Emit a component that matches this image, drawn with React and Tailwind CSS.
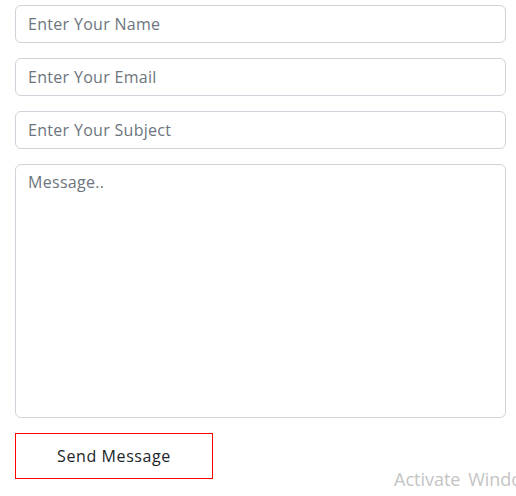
export default function App() {
  const input =
    "h-[38px] w-full rounded-[6px] border border-[#ced4da] bg-white px-3 text-[16px] tracking-[0.3px] text-[#212529] outline-none placeholder:text-[#6c757d]";
  return (
    <div className="relative h-[496px] w-[516px] overflow-hidden bg-white font-['Open_Sans',sans-serif]">
      <form className="flex w-[506px] flex-col gap-[15px] pl-[15px] pt-[5px]">
        <input className={input} placeholder="Enter Your Name" />
        <input className={input} placeholder="Enter Your Email" />
        <input className={input} placeholder="Enter Your Subject" />
        <textarea
          className="h-[254px] w-full resize-none rounded-[6px] border border-[#ced4da] bg-white px-3 py-[5px] text-[16px] tracking-[0.3px] text-[#212529] outline-none placeholder:text-[#6c757d]"
          placeholder="Message.."
        />
        <button
          type="button"
          className="h-[46px] w-[198px] border border-[#ff0000] bg-white text-[16px] tracking-[0.6px] text-[#212529]"
        >
          Send Message
        </button>
      </form>
      <div className="pointer-events-none absolute left-[394px] top-[466px] whitespace-nowrap font-['Open_Sans',sans-serif] text-[18px] text-[#c4c4c4] [word-spacing:3px]">
        Activate Windows
      </div>
    </div>
  );
}
